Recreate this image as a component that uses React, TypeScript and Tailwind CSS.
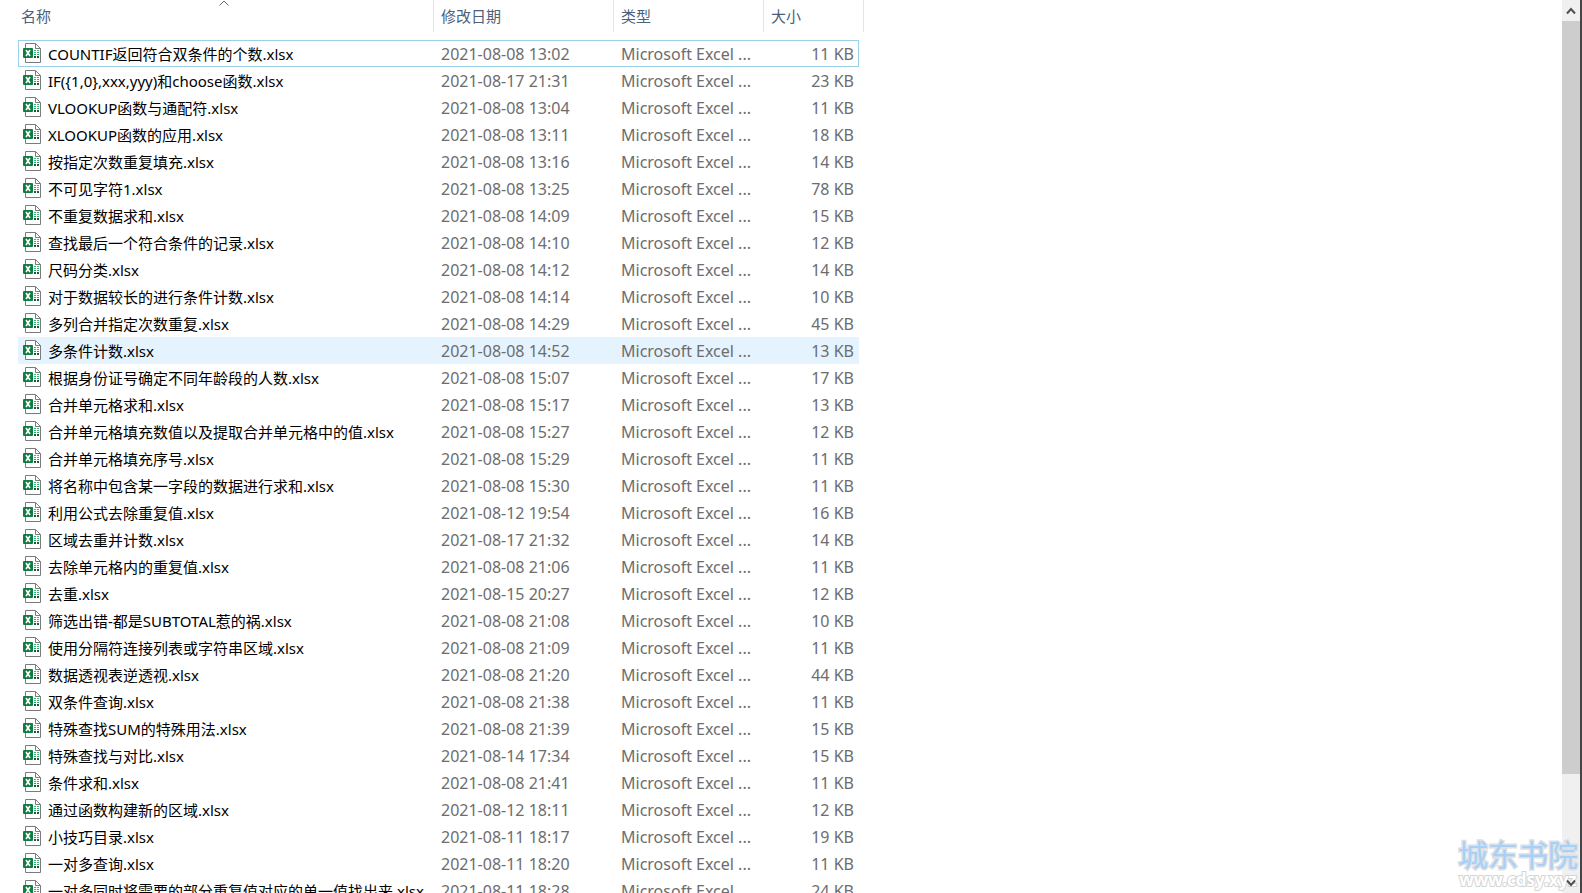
type FileEntry = {
  name: string;
  modified: string;
  size: number;
  state?: 'focused' | 'hovered';
};

const files: FileEntry[] = [
  { name: 'COUNTIF返回符合双条件的个数.xlsx', modified: '2021-08-08 13:02', size: 11, state: 'focused' },
  { name: 'IF({1,0},xxx,yyy)和choose函数.xlsx', modified: '2021-08-17 21:31', size: 23 },
  { name: 'VLOOKUP函数与通配符.xlsx', modified: '2021-08-08 13:04', size: 11 },
  { name: 'XLOOKUP函数的应用.xlsx', modified: '2021-08-08 13:11', size: 18 },
  { name: '按指定次数重复填充.xlsx', modified: '2021-08-08 13:16', size: 14 },
  { name: '不可见字符1.xlsx', modified: '2021-08-08 13:25', size: 78 },
  { name: '不重复数据求和.xlsx', modified: '2021-08-08 14:09', size: 15 },
  { name: '查找最后一个符合条件的记录.xlsx', modified: '2021-08-08 14:10', size: 12 },
  { name: '尺码分类.xlsx', modified: '2021-08-08 14:12', size: 14 },
  { name: '对于数据较长的进行条件计数.xlsx', modified: '2021-08-08 14:14', size: 10 },
  { name: '多列合并指定次数重复.xlsx', modified: '2021-08-08 14:29', size: 45 },
  { name: '多条件计数.xlsx', modified: '2021-08-08 14:52', size: 13, state: 'hovered' },
  { name: '根据身份证号确定不同年龄段的人数.xlsx', modified: '2021-08-08 15:07', size: 17 },
  { name: '合并单元格求和.xlsx', modified: '2021-08-08 15:17', size: 13 },
  { name: '合并单元格填充数值以及提取合并单元格中的值.xlsx', modified: '2021-08-08 15:27', size: 12 },
  { name: '合并单元格填充序号.xlsx', modified: '2021-08-08 15:29', size: 11 },
  { name: '将名称中包含某一字段的数据进行求和.xlsx', modified: '2021-08-08 15:30', size: 11 },
  { name: '利用公式去除重复值.xlsx', modified: '2021-08-12 19:54', size: 16 },
  { name: '区域去重并计数.xlsx', modified: '2021-08-17 21:32', size: 14 },
  { name: '去除单元格内的重复值.xlsx', modified: '2021-08-08 21:06', size: 11 },
  { name: '去重.xlsx', modified: '2021-08-15 20:27', size: 12 },
  { name: '筛选出错-都是SUBTOTAL惹的祸.xlsx', modified: '2021-08-08 21:08', size: 10 },
  { name: '使用分隔符连接列表或字符串区域.xlsx', modified: '2021-08-08 21:09', size: 11 },
  { name: '数据透视表逆透视.xlsx', modified: '2021-08-08 21:20', size: 44 },
  { name: '双条件查询.xlsx', modified: '2021-08-08 21:38', size: 11 },
  { name: '特殊查找SUM的特殊用法.xlsx', modified: '2021-08-08 21:39', size: 15 },
  { name: '特殊查找与对比.xlsx', modified: '2021-08-14 17:34', size: 15 },
  { name: '条件求和.xlsx', modified: '2021-08-08 21:41', size: 11 },
  { name: '通过函数构建新的区域.xlsx', modified: '2021-08-12 18:11', size: 12 },
  { name: '小技巧目录.xlsx', modified: '2021-08-11 18:17', size: 19 },
  { name: '一对多查询.xlsx', modified: '2021-08-11 18:20', size: 11 },
  { name: '一对多同时将需要的部分重复值对应的单一值找出来.xlsx', modified: '2021-08-11 18:28', size: 24 },
];

const rowStyles = {
  normal: '*:border-transparent',
  hovered: '*:border-[#e5f3ff] *:bg-[#e5f3ff]',
  focused: '*:border-[#99d1e8]',
};

const ExcelIcon = () => (
  <svg width="18" height="20" viewBox="0 0 18 20" aria-hidden="true">
    <path d="M2.5 .5H12.5L17.5 5.5V19.5H2.5Z" fill="#fff" stroke="#7b7b7b" />
    <path d="M12.5 .5V5.5H17.5" fill="none" stroke="#7b7b7b" />
    <path d="M11 7h2v1h-2zM14 7h2v1h-2zM11 9h2v1h-2zM14 9h2v1h-2z" fill="#33b87a" />
    <path d="M11 11h2v1h-2zM14 11h2v1h-2z" fill="#21a366" />
    <path d="M11 13h2v2h-2zM14 13h2v2h-2z" fill="#185c37" />
    <rect y="5" width="10" height="10" rx="1" fill="#107c41" />
    <path d="M3 7L7 13M7 7L3 13" stroke="#fff" strokeWidth="1.6" />
  </svg>
);

type HeaderProps = {
  label: string;
  sorted?: boolean;
};

const HeaderButton = ({ label, sorted }: HeaderProps) => (
  <button
    type="button"
    className="relative block h-8 w-full border-r border-[#e2e5e9] pl-[7px] text-left text-[15px] font-normal text-[#4c607a]"
  >
    {label}
    {sorted && (
      <svg
        width="10"
        height="6"
        viewBox="0 0 10 6"
        className="absolute top-0 left-1/2 -translate-x-1/2"
        aria-hidden="true"
      >
        <path d="M.5 5.5L5 1L9.5 5.5" fill="none" stroke="#6b6b6b" />
      </svg>
    )}
  </button>
);

const FileTable = () => (
  <table className="w-[846px] table-fixed border-separate border-spacing-0">
    <colgroup>
      <col className="w-[416px]" />
      <col className="w-[180px]" />
      <col className="w-[150px]" />
      <col className="w-[95px]" />
      <col className="w-[5px]" />
    </colgroup>
    <thead>
      <tr>
        <th className="p-0 pb-2" aria-sort="ascending">
          <div className="-ml-1">
            <HeaderButton label="名称" sorted />
          </div>
        </th>
        <th className="p-0 pb-2">
          <HeaderButton label="修改日期" />
        </th>
        <th className="p-0 pb-2">
          <HeaderButton label="类型" />
        </th>
        <th className="p-0 pb-2" colSpan={2}>
          <HeaderButton label="大小" />
        </th>
      </tr>
    </thead>
    <tbody>
      {files.map((file) => (
        <tr key={file.name} className={rowStyles[file.state ?? 'normal']}>
          <td className="border-y border-l p-0 pl-1 text-[15px] text-black">
            <div className="flex h-[25px] items-center gap-[7px] whitespace-nowrap">
              <span className="shrink-0 pb-0.5">
                <ExcelIcon />
              </span>
              {file.name}
            </div>
          </td>
          <td className="border-y p-0 pl-[7px]">{file.modified}</td>
          <td className="border-y p-0 pl-[7px]">Microsoft Excel ...</td>
          <td className="border-y border-r p-0 pr-1 text-right">{file.size} KB</td>
        </tr>
      ))}
    </tbody>
  </table>
);

const ScrollBar = () => (
  <div className="flex w-5 shrink-0 flex-col border-r-2 border-[#434547] bg-[#f0f0f0]">
    <button type="button" aria-label="向上滚动" className="flex h-[21px] items-center justify-center">
      <svg width="10" height="8" viewBox="0 0 10 8" aria-hidden="true">
        <path d="M1 6.5L5 2L9 6.5" fill="none" stroke="#505050" strokeWidth="2" />
      </svg>
    </button>
    <div className="grow-[23] bg-[#cdcdcd]" />
    <div className="grow-[3]" />
    <button
      type="button"
      aria-label="向下滚动"
      className="relative z-10 flex h-[21px] items-center justify-center"
    >
      <svg width="10" height="8" viewBox="0 0 10 8" aria-hidden="true">
        <path d="M1 1.5L5 6L9 1.5" fill="none" stroke="#505050" strokeWidth="2" />
      </svg>
    </button>
  </div>
);

const Watermark = () => (
  <div className="pointer-events-none absolute right-1 bottom-1 flex flex-col items-center whitespace-nowrap">
    <span className="text-[30px] leading-8 text-[#a6d0f7] [paint-order:stroke_fill] [-webkit-text-stroke:3px_#dde0e4]">
      城东书院
    </span>
    <span className="text-[17px] leading-[18px] font-bold text-white [paint-order:stroke_fill] [-webkit-text-stroke:2px_#d4d4d4]">
      www.cdsy.xyz
    </span>
  </div>
);

const App = () => (
  <div className="relative flex h-screen overflow-hidden bg-white font-['Noto_Sans','Noto_Sans_CJK_SC',sans-serif] text-[16px] leading-6 text-[#6d6d6d]">
    <main className="min-w-0 flex-1 overflow-hidden pl-[18px]">
      <FileTable />
    </main>
    <ScrollBar />
    <Watermark />
  </div>
);

export default App;
